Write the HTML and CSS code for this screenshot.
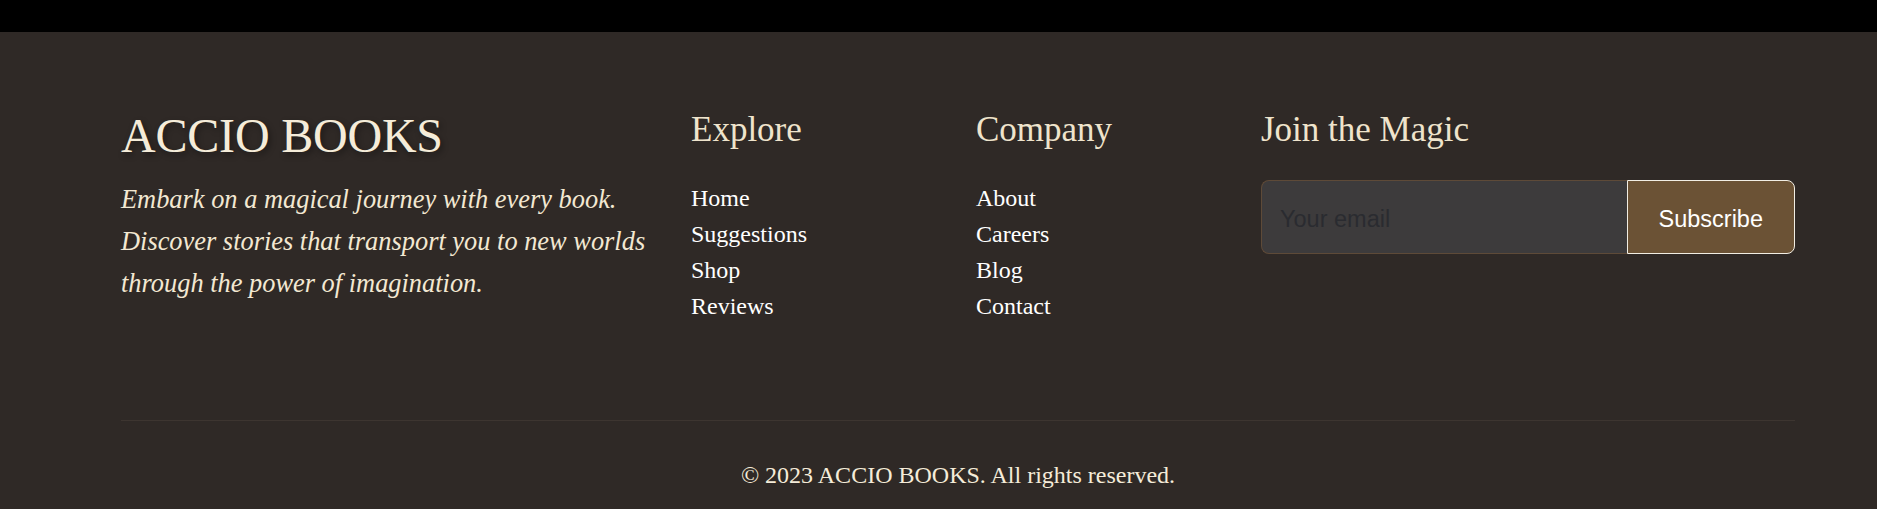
FILE: index.html
```html
<!DOCTYPE html>
<html lang="en">
<head>
<meta charset="utf-8">
<title>Accio Books Footer</title>
<link rel="stylesheet" href="styles.css">
</head>
<body>
<div class="topbar"></div>
<footer class="footer">
  <div class="footer-inner">
    <div class="footer-grid">
      <div class="brand">
        <h2 class="logo">ACCIO BOOKS</h2>
        <p class="tagline">Embark on a magical journey with every book. Discover stories that transport you to new worlds through the power of imagination.</p>
      </div>
      <div class="col">
        <h3 class="col-title">Explore</h3>
        <ul class="links">
          <li><a href="#">Home</a></li>
          <li><a href="#">Suggestions</a></li>
          <li><a href="#">Shop</a></li>
          <li><a href="#">Reviews</a></li>
        </ul>
      </div>
      <div class="col">
        <h3 class="col-title">Company</h3>
        <ul class="links">
          <li><a href="#">About</a></li>
          <li><a href="#">Careers</a></li>
          <li><a href="#">Blog</a></li>
          <li><a href="#">Contact</a></li>
        </ul>
      </div>
      <div class="col">
        <h3 class="col-title">Join the Magic</h3>
        <form class="subscribe" onsubmit="return false">
          <input class="email" type="email" placeholder="Your email">
          <button class="btn" type="submit">Subscribe</button>
        </form>
      </div>
    </div>
    <div class="bottom">
      <p class="copy">© 2023 ACCIO BOOKS. All rights reserved.</p>
    </div>
  </div>
</footer>
</body>
</html>
```
FILE: styles.css
```css
* { box-sizing: border-box; }
html, body { margin: 0; padding: 0; }
body {
  background: #2f2926;
  font-family: "Liberation Serif", "Times New Roman", serif;
  overflow: hidden;
}
.topbar {
  height: 32px;
  background: #000;
}
.footer {
  background: #2f2926;
  color: #f3e8d2;
}
.footer-inner {
  padding: 75px 82px 0 121px;
}
.footer-grid {
  display: grid;
  grid-template-columns: 570fr 285fr 285fr 534fr;
  margin-bottom: 96px;
}
.logo {
  margin: 0;
  font-size: 48px;
  font-weight: 400;
  line-height: 58px;
  letter-spacing: -0.2px;
  color: #f5ecd9;
  text-shadow: 2px 3px 6px rgba(0, 0, 0, 0.4);
}
.tagline {
  margin: 13px 0 0;
  font-size: 26.4px;
  font-style: italic;
  line-height: 42px;
  color: #f3e8d2;
}
.col-title {
  margin: 0 0 29px;
  padding-top: 2px;
  font-size: 35px;
  font-weight: 400;
  line-height: 42px;
  color: #efe4cc;
}
.links {
  list-style: none;
  margin: 0;
  padding: 0;
}
.links li {
  font-size: 24px;
  line-height: 36px;
}
.links a {
  color: #ffffff;
  text-decoration: none;
}
.subscribe {
  display: flex;
  height: 74px;
}
.email {
  flex: 1;
  min-width: 0;
  height: 100%;
  margin: 0;
  padding: 5px 18px 0;
  background: #3d3b3c;
  border: 1px solid #5e4a38;
  border-right: none;
  border-radius: 8px 0 0 8px;
  font-family: "Liberation Sans", Arial, sans-serif;
  font-size: 23.5px;
  color: #eee;
  outline: none;
}
.email::placeholder {
  color: #2a2b30;
}
.btn {
  height: 100%;
  margin: 0;
  padding: 5px 31px 0;
  background: #6b5235;
  border: 1px solid #f2eee4;
  border-radius: 0 8px 8px 0;
  font-family: "Liberation Sans", Arial, sans-serif;
  font-size: 23.5px;
  color: #ffffff;
  cursor: pointer;
}
.bottom {
  border-top: 1px solid #3d3530;
  padding-top: 36px;
  text-align: center;
}
.copy {
  margin: 0;
  font-size: 24px;
  line-height: 36px;
  color: #f5ecd9;
}
```
